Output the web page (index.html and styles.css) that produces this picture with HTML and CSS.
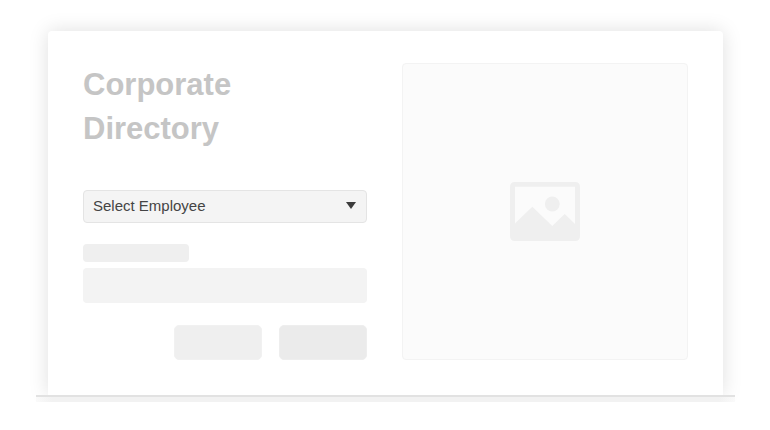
FILE: index.html
```html
<!DOCTYPE html>
<html lang="en">
<head>
    <meta charset="UTF-8">
    <meta name="viewport" content="width=device-width, initial-scale=1.0">
    <title>Corporate Directory</title>
    <link rel="stylesheet" href="styles.css">
</head>
<body>

<main class="stage">
    <div class="card">
        <form class="directory">
            <h1>Corporate Directory</h1>
            <div class="select-box">
                <select id="employee" name="employee" aria-label="Select Employee">
                    <option>Select Employee</option>
                </select>
            </div>
            <label class="field-label" for="details" aria-label="Details"></label>
            <input class="field" id="details" type="text">
            <div class="actions">
                <button class="btn" type="reset" aria-label="Cancel"></button>
                <button class="btn btn-primary" type="submit" aria-label="Submit"></button>
            </div>
        </form>
        <div class="photo">
            <svg width="70" height="59" viewBox="0 0 70 59" aria-hidden="true">
                <path fill="#efefef" fill-rule="evenodd" d="M5 0H65Q70 0 70 5V54Q70 59 65 59H5Q0 59 0 54V5Q0 0 5 0ZM5 4.7V41.5L22.3 24.7L42.3 44L54.7 32L65 42V4.7Z"/>
                <circle cx="42.3" cy="22" r="7.4" fill="#efefef"/>
            </svg>
        </div>
    </div>
    <div class="ledge"></div>
</main>

</body>
</html>
```

FILE: styles.css
```css
* {
    box-sizing: border-box;
}
body {
    font-family: "Liberation Sans", Arial, sans-serif;
    margin: 0;
    background-color: #fff;
}
.stage {
    padding: 31px 47px 0 48px;
    overflow: hidden;
}
.card {
    display: grid;
    grid-template-columns: 284fr 286fr;
    gap: 35px;
    padding: 32px 35px 35px;
    background-color: #fff;
    border-radius: 4px 4px 0 0;
    box-shadow: 0 0 20px rgba(0, 0, 0, 0.13);
}
.directory {
    display: flex;
    flex-direction: column;
}
h1 {
    margin: 0 0 39px;
    max-width: 240px;
    font-size: 31px;
    line-height: 44px;
    color: #c5c5c5;
}
.select-box {
    position: relative;
    margin-bottom: 21px;
}
.select-box select {
    display: block;
    width: 100%;
    height: 33px;
    padding: 0 32px 2px 9px;
    appearance: none;
    font-family: inherit;
    font-size: 15px;
    color: #444;
    background-color: #f4f4f4;
    border: 1px solid #e4e4e4;
    border-radius: 4px;
}
/* Drop-down arrow */
.select-box::after {
    content: "";
    position: absolute;
    top: 12px;
    right: 11px;
    border: 5px solid transparent;
    border-top: 7px solid #3c3c3c;
    border-bottom: 0;
    pointer-events: none;
}
.field-label {
    width: 106px;
    height: 18px;
    margin-bottom: 6px;
    background-color: #efefef;
    border-radius: 4px;
}
.field {
    width: 100%;
    height: 35px;
    margin-bottom: 22px;
    padding: 0 9px;
    background-color: #f3f3f3;
    border: none;
    border-radius: 4px;
}
.actions {
    display: flex;
    justify-content: flex-end;
    gap: 17px;
}
.btn {
    width: 88px;
    height: 35px;
    background-color: #efefef;
    border: 1px solid #f1f1f1;
    border-radius: 5px;
}
.btn-primary {
    background-color: #ebebeb;
    border-color: #eee;
}
.photo {
    display: flex;
    align-items: center;
    justify-content: center;
    background-color: #fbfbfb;
    border: 1px solid #f3f3f3;
    border-radius: 4px;
}
/* Edge the card stands on */
.ledge {
    height: 7px;
    margin: 0 -12px;
    background: linear-gradient(to right, #fafafa, #f2f2f2 16px, #f2f2f2 calc(100% - 16px), #fafafa);
    border-top: 2px solid #e2e2e2;
}
```
